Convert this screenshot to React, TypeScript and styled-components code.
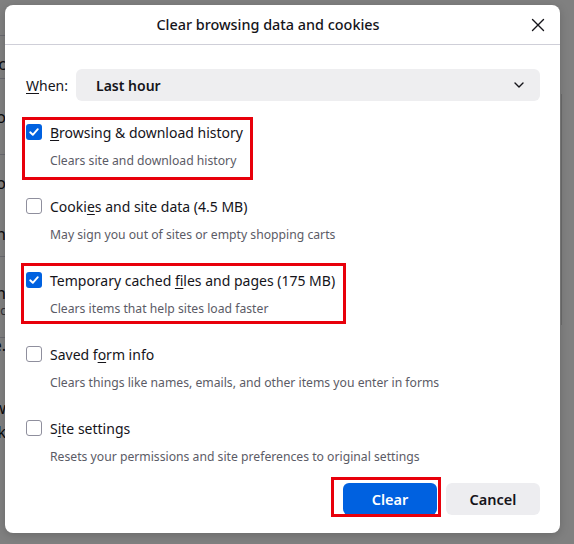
import React from "react";
import styled, { createGlobalStyle } from "styled-components";

const FONT = `"Noto Sans", "Open Sans", "Liberation Sans", sans-serif`;

const GlobalStyle = createGlobalStyle`
  html, body { margin: 0; padding: 0; }
  body { background: #808080; font-family: ${FONT}; }
  * { box-sizing: border-box; }
`;

const Screen = styled.div`
  position: relative;
  width: 574px;
  height: 544px;
  overflow: hidden;
  background: #808080;
  display: flex;
  justify-content: space-between;
`;

/* ---------- dimmed page behind the modal ---------- */
const LeftStrip = styled.div`
  width: 6px;
  display: flex;
  flex-direction: column;
  overflow: hidden;
`;

const StripRow = styled.div<{ $h: number; $line?: boolean; $small?: boolean }>`
  height: ${(p) => p.$h}px;
  flex: none;
  display: flex;
  justify-content: flex-end;
  align-items: center;
  white-space: nowrap;
  line-height: 1;
  font-size: ${(p) => (p.$small ? 12 : 16)}px;
  color: ${(p) => (p.$small ? "#2e2e33" : "#0b0a0d")};
  border-bottom: ${(p) => (p.$line ? "1px solid #6a6a70" : "none")};
`;

const RightStrip = styled.div`
  width: 14px;
  display: flex;
  flex-direction: column;
  padding-top: 94px;
`;

const CardEdge = styled.div`
  margin-left: 1px;
  width: 1px;
  height: 231px;
  background: #6c6c6c;
`;

/* ---------- dialog ---------- */
const Dialog = styled.div`
  position: absolute;
  left: 5px;
  top: 5px;
  width: 555px;
  height: 528px;
  background: #ffffff;
  border-radius: 8px;
  display: flex;
  flex-direction: column;
  color: #15141a;
  box-shadow: 0 2px 10px rgba(0, 0, 0, 0.18);
`;

const Header = styled.div`
  height: 40px;
  flex: none;
  display: flex;
  align-items: center;
  padding: 0 8px 0 7px;
  border-bottom: 1px solid #cfcfd8;
`;

const Title = styled.h1`
  flex: 1;
  margin: 0;
  text-align: center;
  font-size: 14.4px;
  font-weight: 500;
`;

const CloseButton = styled.button`
  width: 28px;
  height: 28px;
  border: 0;
  padding: 0;
  background: transparent;
  display: flex;
  align-items: center;
  justify-content: center;
  color: #15141a;
`;

const Body = styled.div`
  flex: 1;
  display: flex;
  flex-direction: column;
  padding: 24px 20px 18px 21px;
`;

const WhenRow = styled.div`
  display: flex;
  align-items: center;
  gap: 8px;
  height: 32px;
`;

const WhenLabel = styled.label`
  font-size: 14px;
  width: 42px;
`;

const Select = styled.div`
  flex: 1;
  height: 32px;
  border-radius: 6px;
  background: #eeeef0;
  display: flex;
  align-items: center;
  justify-content: space-between;
  padding: 0 16px 0 20px;
  font-size: 14px;
  font-weight: 600;
`;

const Items = styled.div`
  display: flex;
  flex-direction: column;
  align-items: flex-start;
  gap: 24px;
  margin-top: 19px;
`;

const Item = styled.div`
  position: relative;
  display: flex;
  flex-direction: column;
`;

const ItemRow = styled.div`
  height: 24px;
  display: flex;
  align-items: center;
  gap: 8px;
  font-size: 14px;
  white-space: nowrap;
`;

const Box = styled.span<{ $checked: boolean }>`
  width: 16px;
  height: 16px;
  flex: none;
  border-radius: 3px;
  display: flex;
  align-items: center;
  justify-content: center;
  background: ${(p) => (p.$checked ? "#0061e0" : "#ffffff")};
  border: ${(p) => (p.$checked ? "none" : "1px solid #8f8f9d")};
`;

const Description = styled.div`
  margin-top: 6px;
  height: 20px;
  line-height: 21px;
  padding-left: 24px;
  font-size: 12.2px;
  color: #5b5b66;
  white-space: nowrap;
`;

const Key = styled.u`
  text-decoration-thickness: 1px;
  text-underline-offset: 2px;
`;

const Highlight = styled.span<{ $t: number; $r: number; $b: number; $l: number }>`
  position: absolute;
  top: ${(p) => p.$t}px;
  right: ${(p) => p.$r}px;
  bottom: ${(p) => p.$b}px;
  left: ${(p) => p.$l}px;
  border: 3px solid #e8000b;
  pointer-events: none;
`;

const Footer = styled.div`
  margin-top: auto;
  display: flex;
  justify-content: flex-end;
  gap: 9px;
`;

const ButtonWrap = styled.div`
  position: relative;
  display: flex;
`;

const Button = styled.button<{ $primary?: boolean }>`
  width: 94px;
  height: 32px;
  border: 0;
  border-radius: 6px;
  font-family: ${FONT};
  font-size: 14.5px;
  font-weight: 600;
  background: ${(p) => (p.$primary ? "#0061e0" : "#ededf0")};
  color: ${(p) => (p.$primary ? "#ffffff" : "#15141a")};
`;

type Entry = {
  label: React.ReactNode;
  desc: string;
  checked: boolean;
  hl?: { t: number; r: number; b: number; l: number };
};

const entries: Entry[] = [
  {
    label: (
      <>
        <Key>B</Key>rowsing &amp; download history
      </>
    ),
    desc: "Clears site and download history",
    checked: true,
    hl: { t: -3, r: -10, b: -10, l: -4 },
  },
  {
    label: (
      <>
        Cooki<Key>e</Key>s and site data (4.5 MB)
      </>
    ),
    desc: "May sign you out of sites or empty shopping carts",
    checked: false,
  },
  {
    label: (
      <>
        Temporary cached <Key>f</Key>iles and pages (175 MB)
      </>
    ),
    desc: "Clears items that help sites load faster",
    checked: true,
    hl: { t: -5, r: -11, b: -6, l: -5 },
  },
  {
    label: (
      <>
        Saved f<Key>o</Key>rm info
      </>
    ),
    desc: "Clears things like names, emails, and other items you enter in forms",
    checked: false,
  },
  {
    label: (
      <>
        S<Key>i</Key>te settings
      </>
    ),
    desc: "Resets your permissions and site preferences to original settings",
    checked: false,
  },
];

const Check = () => (
  <svg width="12" height="12" viewBox="0 0 12 12" fill="none">
    <path d="M2.2 6.3 L4.8 8.8 L9.8 3.2" stroke="#fff" strokeWidth="1.9" strokeLinecap="round" strokeLinejoin="round" />
  </svg>
);

export default function App() {
  return (
    <>
      <GlobalStyle />
      <Screen>
        <LeftStrip>
          <StripRow $h={36} $line />
          <StripRow $h={14} />
          <StripRow $h={29} $line>ic</StripRow>
          <StripRow $h={76} $line>Co</StripRow>
          <StripRow $h={56}>lo</StripRow>
          <StripRow $h={46} $line>in</StripRow>
          <StripRow $h={28} />
          <StripRow $h={16}>in</StripRow>
          <StripRow $h={3} />
          <StripRow $h={13} $small>ec</StripRow>
          <StripRow $h={21} $line />
          <StripRow $h={14}>ie.</StripRow>
          <StripRow $h={44} />
          <StripRow $h={24}>nw</StripRow>
          <StripRow $h={24}>nk</StripRow>
        </LeftStrip>
        <RightStrip>
          <CardEdge />
        </RightStrip>

        <Dialog role="dialog">
          <Header>
            <Title>Clear browsing data and cookies</Title>
            <CloseButton aria-label="Close">
              <svg width="14" height="14" viewBox="0 0 14 14">
                <path d="M1.5 1.5 L12.5 12.5 M12.5 1.5 L1.5 12.5" stroke="#15141a" strokeWidth="1.4" strokeLinecap="round" />
              </svg>
            </CloseButton>
          </Header>
          <Body>
            <WhenRow>
              <WhenLabel>
                <Key>W</Key>hen:
              </WhenLabel>
              <Select>
                <span>Last hour</span>
                <svg width="10" height="6" viewBox="0 0 10 6">
                  <path d="M1 1 L5 5 L9 1" fill="none" stroke="#15141a" strokeWidth="1.4" strokeLinecap="round" strokeLinejoin="round" />
                </svg>
              </Select>
            </WhenRow>
            <Items>
              {entries.map((e, i) => (
                <Item key={i}>
                  <ItemRow>
                    <Box $checked={e.checked}>{e.checked && <Check />}</Box>
                    <span>{e.label}</span>
                  </ItemRow>
                  <Description>{e.desc}</Description>
                  {e.hl && <Highlight $t={e.hl.t} $r={e.hl.r} $b={e.hl.b} $l={e.hl.l} />}
                </Item>
              ))}
            </Items>
            <Footer>
              <ButtonWrap>
                <Button $primary>Clear</Button>
                <Highlight $t={-6} $r={-4} $b={-2} $l={-12} />
              </ButtonWrap>
              <Button>Cancel</Button>
            </Footer>
          </Body>
        </Dialog>
      </Screen>
    </>
  );
}
